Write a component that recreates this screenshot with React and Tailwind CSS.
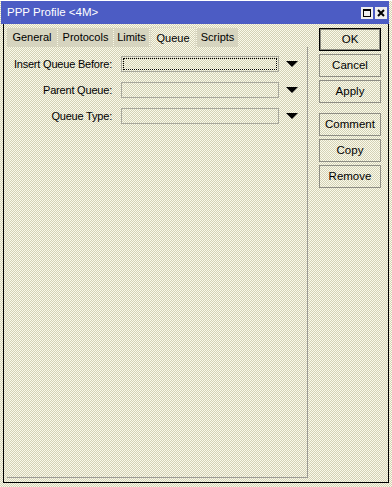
import { useState } from "react";

const checker =
  "bg-[repeating-conic-gradient(#fbfaea_0_25%,#d3d1b6_0_50%)] bg-[length:2px_2px]";

const tabs = [
  { name: "General", w: "w-[50px]" },
  { name: "Protocols", w: "w-[55px]" },
  { name: "Limits", w: "w-[35px]" },
  { name: "Queue", w: "w-[46px]" },
  { name: "Scripts", w: "w-[41px]" },
];

const fields = [
  { label: "Insert Queue Before:", focus: true },
  { label: "Parent Queue:" },
  { label: "Queue Type:" },
];

function Arrow() {
  return (
    <svg width="12" height="6" viewBox="0 0 12 6" className="shrink-0">
      <path d="M0 0h12L6 6z" fill="#000" />
    </svg>
  );
}

function Btn({ children, primary }) {
  return (
    <button
      className={`w-[62px] h-[23px] flex items-center justify-center text-[11.5px] text-black ${checker} ${
        primary ? "border border-black outline outline-1 outline-[#8a8a80] -outline-offset-2" : "border border-[#8e8d84]"
      }`}
    >
      {children}
    </button>
  );
}

export default function App() {
  const [tab, setTab] = useState("Queue");

  return (
    <div
      className={`w-[392px] h-[487px] ${checker} text-black`}
      style={{ fontFamily: "'Liberation Sans', Arial, sans-serif" }}
    >
      {/* title bar */}
      <div className="ml-[1px] mt-[1px] w-[388px] h-[23px] bg-[#4c5cc4] flex items-center pl-[6px] pr-[2px]">
        <span className="text-white text-[11.5px] flex-1">PPP Profile &lt;4M&gt;</span>
        <div className="flex gap-[2px]">
          <div className="w-[12px] h-[12px] bg-[#eeeeee] flex items-center justify-center">
            <div className="w-[8px] h-[8px] border border-black border-t-2" />
          </div>
          <div className="w-[12px] h-[12px] bg-[#eeeeee] flex items-center justify-center">
            <svg width="8" height="8" viewBox="0 0 8 8">
              <path d="M1 1l6 6M7 1L1 7" stroke="#000" strokeWidth="2" />
            </svg>
          </div>
        </div>
      </div>

      {/* body */}
      <div className="ml-[3px] w-[386px] h-[459px] border-l border-r border-b border-black flex">
        <div className="w-[304px] pl-[3px] pt-[2px] flex flex-col">
          <div className="flex items-end h-[21px]">
            {tabs.map((t) => {
              const sel = t.name === tab;
              return (
                <div
                  key={t.name}
                  onClick={() => setTab(t.name)}
                  className={`${t.w} text-[11px] flex items-center justify-center mr-[1px] cursor-default ${
                    sel
                      ? `h-[21px] ${checker} border-t border-l border-r border-[#dddbc8] relative top-[1px]`
                      : "h-[19px] bg-[#d6d4bf]"
                  }`}
                >
                  {t.name}
                </div>
              );
            })}
          </div>
          <div className="flex-1 mb-[4px] border-r border-b border-[#9c9b94] pt-[9px] flex flex-col gap-[10px]">
            {fields.map((f) => (
              <div key={f.label} className="flex items-center h-[16px]">
                <span className="w-[105px] text-right text-[11px] tracking-[-0.2px] whitespace-nowrap">
                  {f.label}
                </span>
                <div
                  className={`ml-[9px] w-[158px] h-[16px] border border-[#a8a79c] ${
                    f.focus ? "p-[1px] border-[#77766e]" : ""
                  }`}
                >
                  {f.focus && <div className="w-full h-full border border-dotted border-black" />}
                </div>
                <div className="ml-[7px]">
                  <Arrow />
                </div>
              </div>
            ))}
          </div>
        </div>
        <div className="pl-[11px] pt-[4px] flex flex-col gap-[3px]">
          <Btn primary>OK</Btn>
          <Btn>Cancel</Btn>
          <Btn>Apply</Btn>
          <div className="h-[4px]" />
          <Btn>Comment</Btn>
          <Btn>Copy</Btn>
          <Btn>Remove</Btn>
        </div>
      </div>
    </div>
  );
}
